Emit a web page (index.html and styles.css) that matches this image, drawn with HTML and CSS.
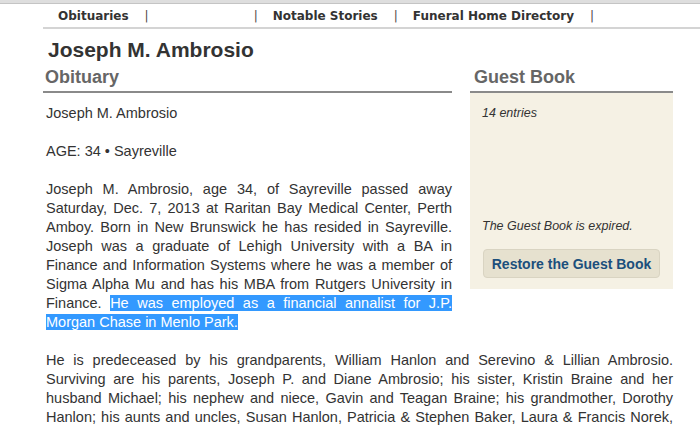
FILE: index.html
```html
<!DOCTYPE html>
<html>
<head>
<meta charset="utf-8">
<link rel="stylesheet" href="styles.css">
</head>
<body>
<div class="topstrip"></div>
<nav class="nav">
  <span class="nav-item">Obituaries</span><span class="sep">|</span>
  <span class="nav-spacer"></span>
  <span class="sep">|</span><span class="nav-item">Notable Stories</span><span class="sep">|</span>
  <span class="nav-item">Funeral Home Directory</span><span class="sep">|</span>
</nav>
<main class="page">
  <h1 class="name">Joseph M. Ambrosio</h1>
  <aside class="guest">
    <h2 class="section-title guest-title">Guest Book</h2>
    <div class="guest-panel">
      <p class="guest-note entries">14 entries</p>
      <p class="guest-note">The Guest Book is expired.</p>
      <button class="restore">Restore the Guest Book</button>
    </div>
  </aside>
  <h2 class="section-title obit-title">Obituary</h2>
  <div class="obit">
    <p>Joseph M. Ambrosio</p>
    <p>AGE: 34 • Sayreville</p>
    <p class="just">Joseph M. Ambrosio, age 34, of Sayreville passed away Saturday, Dec. 7, 2013 at Raritan Bay Medical Center, Perth Amboy. Born in New Brunswick he has resided in Sayreville. Joseph was a graduate of Lehigh University with a BA in Finance and Information Systems where he was a member of Sigma Alpha Mu and has his MBA from Rutgers University in Finance. <span class="sel">He was employed as a financial annalist for J.P. Morgan Chase in Menlo Park.</span></p>
    <p class="just">He is predeceased by his grandparents, William Hanlon and Serevino &amp; Lillian Ambrosio. Surviving are his parents, Joseph P. and Diane Ambrosio; his sister, Kristin Braine and her husband Michael; his nephew and niece, Gavin and Teagan Braine; his grandmother, Dorothy Hanlon; his aunts and uncles, Susan Hanlon, Patricia &amp; Stephen Baker, Laura &amp; Francis Norek, and many cousins.</p>
  </div>
</main>
</body>
</html>
```

FILE: styles.css
```css
html, body {
  margin: 0;
  padding: 0;
  background: #fff;
}
body {
  font-family: "Liberation Sans", Arial, sans-serif;
  color: #333;
  overflow: hidden;
}
.topstrip {
  height: 3px;
  background: #dedede;
  border-bottom: 1px solid #c4c4c4;
}
.nav {
  margin-left: 43px;
  height: 23px;
  border-bottom: 2px solid #d4d4d4;
  display: flex;
  align-items: center;
  padding-left: 15px;
  font-family: "DejaVu Sans", Verdana, sans-serif;
  font-weight: bold;
  font-size: 12px;
  color: #333;
}
.nav-item {
  white-space: nowrap;
}
.sep {
  font-weight: normal;
  color: #4a4646;
  margin: 0 15px 0 16px;
}
.nav-spacer {
  width: 74px;
}
.page {
  margin-left: 43px;
  width: 630px;
}
.name {
  margin: 0;
  padding: 8px 0 0 5px;
  font-size: 21px;
  line-height: 25px;
  font-weight: bold;
  color: #333;
}
.section-title {
  margin: 0;
  font-size: 18px;
  line-height: 22px;
  font-weight: bold;
  color: #666;
  border-bottom: 2px solid #8a8a8a;
  padding: 4px 0 3px 2px;
}
.obit-title {
  display: flow-root;
}
.guest {
  float: right;
  width: 203px;
  margin-left: 18px;
  margin-bottom: 50px;
}
.guest-title {
  padding-left: 4px;
}
.guest-panel {
  background: #f5f1e4;
  padding: 12px 13px 11px 12px;
}
.guest-note {
  margin: 0;
  font-size: 12.5px;
  line-height: 16px;
  font-style: italic;
  color: #333;
}
.entries {
  margin-bottom: 97px;
}
.restore {
  display: block;
  box-sizing: border-box;
  margin: 15px 0 0 1px;
  padding: 0 7px;
  height: 29px;
  width: 177px;
  white-space: nowrap;
  background: #e6e1cf;
  border: 1px solid #d9d4c2;
  border-radius: 4px;
  font-family: "Liberation Sans", Arial, sans-serif;
  font-size: 14px;
  font-weight: bold;
  color: #1b4f7c;
  text-align: center;
}
.obit {
  padding: 11px 0 0 3px;
}
.obit p {
  margin: 0 0 19px;
  font-size: 14.5px;
  line-height: 19px;
}
.obit .just {
  text-align: justify;
}
.sel {
  background: #3399ff;
  color: #fff;
}
```
